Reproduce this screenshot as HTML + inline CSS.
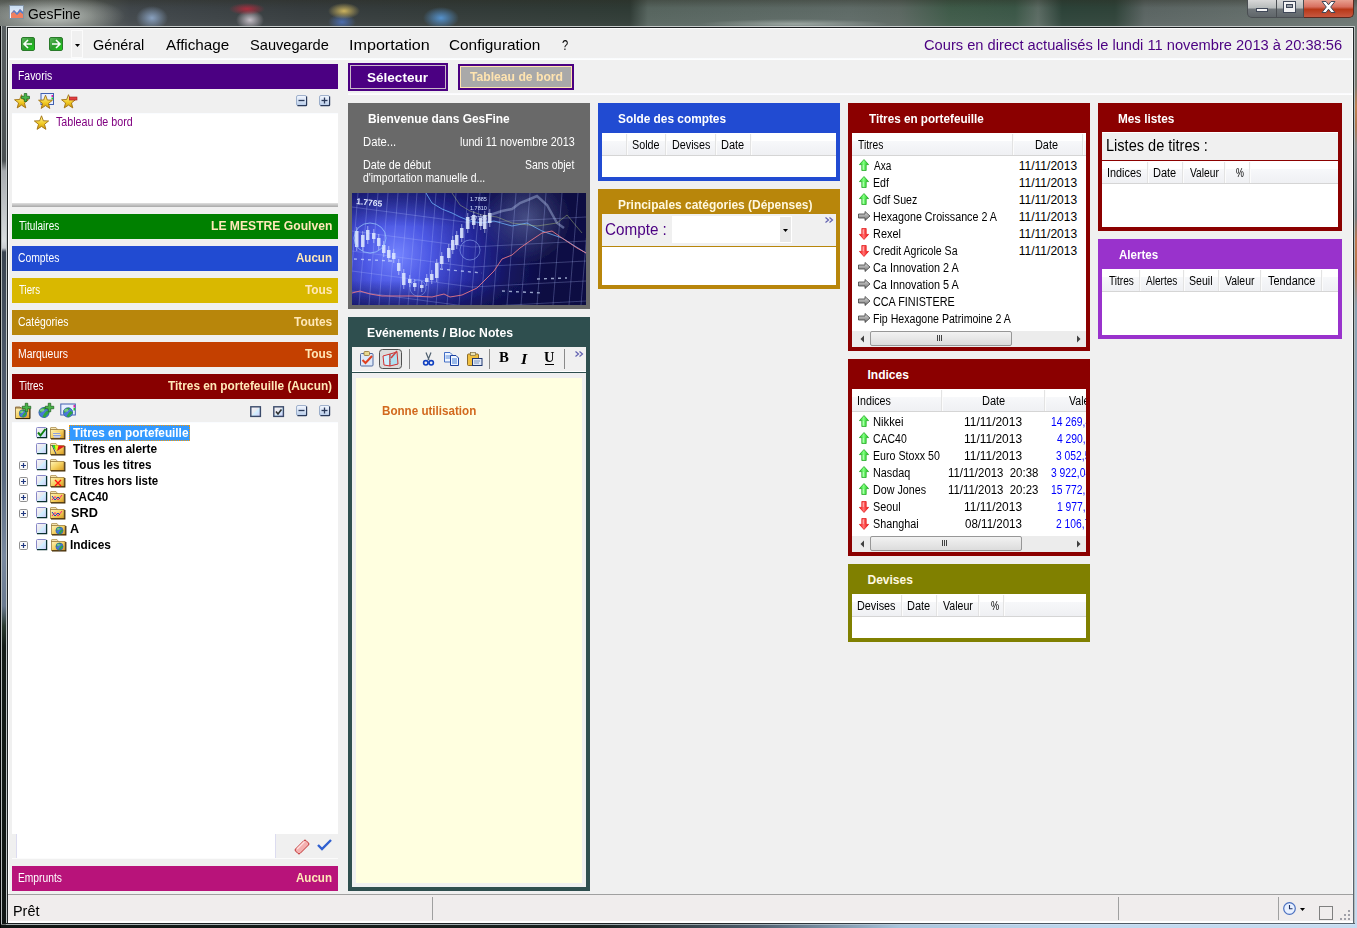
<!DOCTYPE html>
<html><head><meta charset="utf-8"><style>
html,body{margin:0;padding:0;width:1357px;height:928px;overflow:hidden;position:relative;background:#f0f0f0;font-family:"Liberation Sans", sans-serif;}
div,span,svg{position:absolute;box-sizing:border-box;}
.t{white-space:pre;}
</style></head><body>
<div style="left:0px;top:0px;width:1357px;height:928px;background:linear-gradient(90deg,#6c7270 0px,#4a5052 120px,#3a4044 300px,#353c3e 600px,#34423c 850px,#3e5a4a 1000px,#5a6a64 1150px,#6e7a76 1357px);"></div>
<div style="left:0px;top:0px;width:1357px;height:26px;background:linear-gradient(90deg,#6a706c 0px,#5a605c 90px,#40464a 130px,#363c3e 300px,#323a38 450px,#2e3a34 630px,#56645e 648px,#5e6a66 850px,#5a6660 900px,#3e5a48 950px,#3a5646 1015px,#5a6a62 1038px,#2c4238 1062px,#2e4238 1115px,#5a6462 1145px,#6a7470 1357px);"></div>
<div style="left:0px;top:0px;width:1357px;height:26px;background:linear-gradient(180deg,rgba(40,40,30,0.35) 0px,rgba(40,40,30,0) 8px,rgba(255,255,255,0.03) 20px,rgba(255,255,255,0.06) 26px);"></div>
<div style="left:0px;top:0px;width:220px;height:26px;background:radial-gradient(ellipse 70px 20px at 55px 16px,rgba(225,230,225,0.75),rgba(210,215,210,0.3) 60%,rgba(200,205,200,0));"></div>
<div style="left:130px;top:2px;width:45px;height:26px;background:radial-gradient(ellipse 16px 12px at 22px 16px,rgba(160,190,230,0.75),rgba(160,190,230,0));"></div>
<div style="left:222px;top:2px;width:50px;height:26px;background:radial-gradient(ellipse 18px 6px at 25px 7px,rgba(200,40,60,0.8),rgba(200,40,60,0)),radial-gradient(ellipse 14px 10px at 28px 18px,rgba(230,220,230,0.8),rgba(230,220,230,0));"></div>
<div style="left:320px;top:2px;width:48px;height:26px;background:radial-gradient(ellipse 16px 8px at 24px 9px,rgba(230,200,100,0.85),rgba(230,200,100,0)),radial-gradient(ellipse 14px 8px at 22px 20px,rgba(80,120,200,0.8),rgba(80,120,200,0));"></div>
<div style="left:415px;top:2px;width:52px;height:26px;background:radial-gradient(ellipse 18px 11px at 26px 16px,rgba(90,160,230,0.85),rgba(90,160,230,0));"></div>
<div style="left:700px;top:18px;width:190px;height:8px;background:radial-gradient(ellipse 95px 5px at 95px 6px,rgba(210,220,215,0.5),rgba(210,220,215,0));"></div>
<div style="left:0px;top:925px;width:1357px;height:3px;background:linear-gradient(90deg,#101614 0px,#1a2220 600px,#506070 760px,#a8c4dc 900px,#c0d8ee 1100px,#c8dcf0 1357px);"></div>
<div style="left:9px;top:5px;width:15px;height:14px;background:linear-gradient(180deg,#c8dcf0,#f8f8ff);border:1px solid #8090a0;"><svg width="14" height="13" style="left:0;top:0"><path d="M1 12 L1 7 L4 4 L7 7 L10 3 L13 6 L13 12 Z" fill="#f08060"/><path d="M1 8 L4 4 L7 7 L10 3 L13 6 L13 8 L10 6 L7 9 L4 6 Z" fill="#5080d0"/></svg></div>
<span class="t" style="left:28.07px;top:5.5px;font-size:15px;line-height:15px;color:#000;transform:scaleX(0.9273);transform-origin:left;">GesFine</span>
<div style="left:1247px;top:0px;width:30px;height:18px;border:1px solid #4a4e52;border-top:none;border-radius:0 0 0 5px;background:linear-gradient(180deg,#d8d8d8 0%,#b8bcbc 45%,#70767a 55%,#60666a 100%);"><div style="left:8px;top:8px;width:12px;height:4px;background:#f4f4f4;border:1px solid #404858;"></div></div>
<div style="left:1277px;top:0px;width:27px;height:18px;border:1px solid #4a4e52;border-top:none;border-left:none;background:linear-gradient(180deg,#d8d8d8 0%,#b8bcbc 45%,#70767a 55%,#60666a 100%);"><div style="left:6px;top:1px;width:13px;height:12px;border:1px solid #404858;background:#f4f4f4;"><div style="left:2px;top:2px;width:7px;height:4px;border:1px solid #404858;background:#9aa0a8"></div></div></div>
<div style="left:1304px;top:0px;width:50px;height:18px;border:1px solid #5a2a20;border-top:none;border-left:none;border-radius:0 0 5px 0;background:linear-gradient(180deg,#e8a090 0%,#d87060 40%,#b83818 55%,#c85840 100%);"><svg width="20" height="16" style="left:17px;top:1px"><path d="M1 0.5 L5 0.5 L7.5 3.8 L10 0.5 L14 0.5 L9.7 6 L14 11.5 L10 11.5 L7.5 8.2 L5 11.5 L1 11.5 L5.3 6 Z" fill="#fff" stroke="#404858" stroke-width="1"/></svg></div>
<div style="left:1px;top:26px;width:1px;height:898px;background:#b4baba;"></div>
<div style="left:2px;top:26px;width:4px;height:898px;background:linear-gradient(180deg,#5a6062 0px,#4a5052 135px,#a8acb0 145px,#d8dcde 215px,#c8ccd0 222px,#3a4450 226px,#4a5666 320px,#5a6a80 450px,#7a8aa0 530px,#6a7a90 580px,#2a3a30 600px,#141c18 620px,#101614 898px);"></div>
<div style="left:6px;top:26px;width:1px;height:898px;background:#c0c6c6;"></div>
<div style="left:7px;top:26px;width:1px;height:897px;background:#202426;"></div>
<div style="left:0px;top:26px;width:1px;height:902px;background:#050505;"></div>
<div style="left:6px;top:26px;width:1349px;height:1px;background:#c8cccc;"></div>
<div style="left:7px;top:27px;width:1347px;height:1px;background:#1c2022;"></div>
<div style="left:1354px;top:26px;width:1px;height:898px;background:#b4baba;"></div>
<div style="left:1353px;top:27px;width:1px;height:897px;background:linear-gradient(180deg,#202426 0px,#303638 400px,#5a6670 897px);"></div>
<div style="left:1355px;top:26px;width:2px;height:899px;background:linear-gradient(180deg,#6e7a76 0px,#7a7a70 60px,#c08050 80px,#b07850 100px,#8a8a88 120px,#707a80 190px,#c07850 215px,#b87850 245px,#8aa0b0 280px,#a8c0d8 500px,#c8dcf0 899px);"></div>
<div style="left:6px;top:923px;width:1349px;height:1px;background:linear-gradient(90deg,#1a1e20 0px,#202426 700px,#4a5660 1000px,#5a6670 1357px);"></div>
<div style="left:6px;top:924px;width:1349px;height:1px;background:linear-gradient(90deg,#a8b0b0 0px,#98a4a8 700px,#c8dcf0 1000px,#d0e4f4 1357px);"></div>
<div style="left:8px;top:28px;width:1345px;height:894px;background:#f0f0f0;border-top:1px solid #fff;border-left:1px solid #fff;border-right:1px solid #fafafa;"></div>
<div style="left:8px;top:58px;width:1345px;height:2px;background:linear-gradient(180deg,#f8fafd,#ffffff);"></div>
<div style="left:21px;top:37px;width:14px;height:14px;border-radius:2px;background:linear-gradient(135deg,#5cb85c 0%,#2e9a2e 50%,#1acd1a 100%);border:1px solid #2a7a2a;"><svg width="14" height="14" style="left:-1px;top:-1px"><path d="M11 7 L3.5 7 M7 3 L3 7 L7 11" stroke="#fff" stroke-width="1.6" fill="none"/></svg></div>
<div style="left:49px;top:37px;width:14px;height:14px;border-radius:2px;background:linear-gradient(135deg,#5cb85c 0%,#2e9a2e 50%,#1acd1a 100%);border:1px solid #2a7a2a;"><svg width="14" height="14" style="left:-1px;top:-1px"><path d="M3 7 L10.5 7 M7 3 L11 7 L7 11" stroke="#fff" stroke-width="1.6" fill="none"/></svg></div>
<div style="left:71px;top:30px;width:12px;height:28px;border:1px solid #fbfbfb;"></div>
<div style="left:75px;top:44px;width:5px;height:3px;"><svg width="5" height="3" style="left:0;top:0"><path d="M0 0 L5 0 L2.5 3 Z" fill="#000"/></svg></div>
<span class="t" style="left:93.04px;top:37px;font-size:15px;line-height:15px;color:#000;transform:scaleX(0.9615);transform-origin:left;">Général</span>
<span class="t" style="left:166.00px;top:37px;font-size:15px;line-height:15px;color:#000;transform:scaleX(1.0161);transform-origin:left;">Affichage</span>
<span class="t" style="left:250.03px;top:37px;font-size:15px;line-height:15px;color:#000;transform:scaleX(0.9747);transform-origin:left;">Sauvegarde</span>
<span class="t" style="left:348.92px;top:37px;font-size:15px;line-height:15px;color:#000;transform:scaleX(1.0753);transform-origin:left;">Importation</span>
<span class="t" style="left:448.98px;top:37px;font-size:15px;line-height:15px;color:#000;transform:scaleX(1.0227);transform-origin:left;">Configuration</span>
<span class="t" style="left:562.26px;top:37px;font-size:15px;line-height:15px;color:#000;transform:scaleX(0.7429);transform-origin:left;">?</span>
<span class="t" style="left:924.05px;top:36.6px;font-size:15.5px;line-height:15.5px;color:#4b0082;transform:scaleX(0.9466);transform-origin:left;">Cours en direct actualisés le lundi 11 novembre 2013 à 20:38:56</span>
<div style="left:12px;top:64px;width:326px;height:25px;background:#4b0082;"></div>
<span class="t" style="left:17.63px;top:70px;font-size:12px;line-height:12px;color:#fff;transform:scaleX(0.8684);transform-origin:left;">Favoris</span>
<div style="left:12px;top:113px;width:326px;height:1px;background:#fafcff;"></div>
<div style="left:12px;top:114px;width:326px;height:89px;background:#fff;"></div>
<div style="left:12px;top:203px;width:326px;height:4px;background:linear-gradient(180deg,#e0e0e0,#a8a8a8);"></div>
<span class="t" style="left:55.50px;top:116px;font-size:12px;line-height:12px;color:#800080;transform:scaleX(0.8907);transform-origin:left;">Tableau de bord</span>
<div style="left:12px;top:214px;width:326px;height:25px;background:#008000;"></div>
<span class="t" style="left:18.50px;top:220px;font-size:12px;line-height:12px;color:#fff;transform:scaleX(0.8333);transform-origin:left;">Titulaires</span>
<span class="t" style="left:210.69px;top:220px;font-size:12px;line-height:12px;color:#ffe8b8;font-weight:bold;transform:scaleX(1.0109);transform-origin:left;">LE MESTRE Goulven</span>
<div style="left:12px;top:246px;width:326px;height:25px;background:#214bd2;"></div>
<span class="t" style="left:17.64px;top:252px;font-size:12px;line-height:12px;color:#fff;transform:scaleX(0.8617);transform-origin:left;">Comptes</span>
<span class="t" style="left:296.30px;top:252px;font-size:12px;line-height:12px;color:#ffe8b8;font-weight:bold;transform:scaleX(0.9649);transform-origin:left;">Aucun</span>
<div style="left:12px;top:278px;width:326px;height:25px;background:#d9b800;"></div>
<span class="t" style="left:18.50px;top:284px;font-size:12px;line-height:12px;color:#fff;transform:scaleX(0.8077);transform-origin:left;">Tiers</span>
<span class="t" style="left:305.30px;top:284px;font-size:12px;line-height:12px;color:#ffe8b8;font-weight:bold;transform:scaleX(0.9889);transform-origin:left;">Tous</span>
<div style="left:12px;top:310px;width:326px;height:25px;background:#b8860b;"></div>
<span class="t" style="left:17.63px;top:316px;font-size:12px;line-height:12px;color:#fff;transform:scaleX(0.8684);transform-origin:left;">Catégories</span>
<span class="t" style="left:294.30px;top:316px;font-size:12px;line-height:12px;color:#ffe8b8;font-weight:bold;transform:scaleX(0.9921);transform-origin:left;">Toutes</span>
<div style="left:12px;top:342px;width:326px;height:25px;background:#c44000;"></div>
<span class="t" style="left:17.63px;top:348px;font-size:12px;line-height:12px;color:#fff;transform:scaleX(0.8696);transform-origin:left;">Marqueurs</span>
<span class="t" style="left:305.30px;top:348px;font-size:12px;line-height:12px;color:#ffe8b8;font-weight:bold;transform:scaleX(0.9889);transform-origin:left;">Tous</span>
<div style="left:12px;top:374px;width:326px;height:25px;background:#880000;"></div>
<span class="t" style="left:18.50px;top:380px;font-size:12px;line-height:12px;color:#fff;transform:scaleX(0.8276);transform-origin:left;">Titres</span>
<span class="t" style="left:168.40px;top:380px;font-size:12px;line-height:12px;color:#ffe8b8;font-weight:bold;transform:scaleX(0.9855);transform-origin:left;">Titres en portefeuille (Aucun)</span>
<div style="left:12px;top:422px;width:326px;height:1px;background:#fafcff;"></div>
<div style="left:12px;top:423px;width:326px;height:411px;background:#fff;"></div>
<div style="left:69px;top:425px;width:121px;height:16px;background:#3399ff;border:1px dotted #ff9900;"></div>
<span class="t" style="left:72.60px;top:427px;font-size:12px;line-height:12px;color:#fff;font-weight:bold;transform:scaleX(0.9797);transform-origin:left;">Titres en portefeuille</span>
<span class="t" style="left:72.60px;top:443px;font-size:12px;line-height:12px;color:#000;font-weight:bold;transform:scaleX(0.9882);transform-origin:left;">Titres en alerte</span>
<span class="t" style="left:72.60px;top:459px;font-size:12px;line-height:12px;color:#000;font-weight:bold;transform:scaleX(0.9750);transform-origin:left;">Tous les titres</span>
<span class="t" style="left:72.60px;top:475px;font-size:12px;line-height:12px;color:#000;font-weight:bold;transform:scaleX(0.9551);transform-origin:left;">Titres hors liste</span>
<span class="t" style="left:70.10px;top:491px;font-size:12px;line-height:12px;color:#000;font-weight:bold;transform:scaleX(0.9744);transform-origin:left;">CAC40</span>
<span class="t" style="left:70.84px;top:507px;font-size:12px;line-height:12px;color:#000;font-weight:bold;transform:scaleX(1.0625);transform-origin:left;">SRD</span>
<span class="t" style="left:70.10px;top:523px;font-size:12px;line-height:12px;color:#000;font-weight:bold;transform:scaleX(1.0500);transform-origin:left;">A</span>
<span class="t" style="left:70.31px;top:539px;font-size:12px;line-height:12px;color:#000;font-weight:bold;transform:scaleX(0.9875);transform-origin:left;">Indices</span>
<div style="left:12px;top:834px;width:326px;height:24px;background:#f0f0f0;"></div>
<div style="left:16px;top:834px;width:1px;height:25px;background:#dcdcf0;"></div>
<div style="left:17px;top:834px;width:258px;height:25px;background:#fff;"></div>
<div style="left:275px;top:834px;width:1px;height:25px;background:#dcdcf0;"></div>
<div style="left:12px;top:858px;width:326px;height:1px;background:#fbfbfb;"></div>
<div style="left:12px;top:866px;width:326px;height:25px;background:#b8137a;"></div>
<span class="t" style="left:17.65px;top:872px;font-size:12px;line-height:12px;color:#fff;transform:scaleX(0.8540);transform-origin:left;">Emprunts</span>
<span class="t" style="left:296.30px;top:872px;font-size:12px;line-height:12px;color:#ffe8b8;font-weight:bold;transform:scaleX(0.9649);transform-origin:left;">Aucun</span>
<div style="left:8px;top:894px;width:1345px;height:1px;background:#a0a0a0;"></div>
<div style="left:8px;top:895px;width:1345px;height:26px;background:#f0eded;"></div>
<div style="left:8px;top:921px;width:1345px;height:2px;background:#ffffff;"></div>
<span class="t" style="left:12.74px;top:903px;font-size:15px;line-height:15px;color:#000;transform:scaleX(0.9615);transform-origin:left;">Prêt</span>
<div style="left:432px;top:897px;width:1px;height:23px;background:#a0a0a0;"></div>
<div style="left:1118px;top:897px;width:1px;height:23px;background:#a0a0a0;"></div>
<div style="left:1278px;top:897px;width:1px;height:23px;background:#a0a0a0;"></div>
<div style="left:1319px;top:906px;width:14px;height:14px;border:1px solid #808080;"></div>
<div style="left:348px;top:63px;width:100px;height:28px;background:#4b0082;"><div style="left:2px;top:2px;width:96px;height:24px;border:1px solid #c8b8c8;"></div></div>
<span class="t" style="left:366.56px;top:70.5px;font-size:13px;line-height:13px;color:#fff;font-weight:bold;transform:scaleX(1.0414);transform-origin:left;">Sélecteur</span>
<div style="left:458px;top:64px;width:116px;height:26px;background:#a9a9a9;border:2px solid #4b0082;"><div style="left:0;top:0;width:112px;height:22px;border:1px solid #ffe4b0;"></div></div>
<span class="t" style="left:470.00px;top:70.6px;font-size:12px;line-height:12px;color:#ffe4b0;font-weight:bold;transform:scaleX(1.0132);transform-origin:left;">Tableau de bord</span>
<div style="left:348px;top:93px;width:1005px;height:2px;background:linear-gradient(180deg,#f8f8fc,#fff);"></div>
<div style="left:348px;top:103px;width:242px;height:206px;background:#696969;"></div>
<span class="t" style="left:367.51px;top:113px;font-size:12px;line-height:12px;color:#fff;font-weight:bold;transform:scaleX(0.9929);transform-origin:left;">Bienvenue dans GesFine</span>
<span class="t" style="left:362.56px;top:136px;font-size:12px;line-height:12px;color:#fff;transform:scaleX(0.9394);transform-origin:left;">Date...</span>
<span class="t" style="left:459.50px;top:136px;font-size:12px;line-height:12px;color:#fff;transform:scaleX(0.8976);transform-origin:left;">lundi 11 novembre 2013</span>
<span class="t" style="left:362.60px;top:159px;font-size:12px;line-height:12px;color:#fff;transform:scaleX(0.8986);transform-origin:left;">Date de début</span>
<span class="t" style="left:524.63px;top:159px;font-size:12px;line-height:12px;color:#fff;transform:scaleX(0.8696);transform-origin:left;">Sans objet</span>
<span class="t" style="left:363.00px;top:172px;font-size:12px;line-height:12px;color:#fff;transform:scaleX(0.8705);transform-origin:left;">d&#x27;importation manuelle d...</span>
<svg width="234" height="112" style="left:352px;top:193px"><defs><radialGradient id="cg" gradientUnits="userSpaceOnUse" cx="45" cy="62" r="150"><stop offset="0" stop-color="#7484ff"/><stop offset="0.22" stop-color="#4c58e4"/><stop offset="0.5" stop-color="#262aa0"/><stop offset="0.75" stop-color="#141560"/><stop offset="1" stop-color="#0e0e44"/></radialGradient><radialGradient id="cg2" gradientUnits="userSpaceOnUse" cx="175" cy="25" r="45"><stop offset="0" stop-color="#8898c8" stop-opacity="0.45"/><stop offset="1" stop-color="#8898c8" stop-opacity="0"/></radialGradient><filter id="cblur"><feGaussianBlur stdDeviation="0.45"/></filter><linearGradient id="cg3" x1="0" y1="0" x2="0" y2="1"><stop offset="0" stop-color="#0a0a40" stop-opacity="0.5"/><stop offset="0.3" stop-color="#0a0a40" stop-opacity="0"/><stop offset="0.78" stop-color="#0a0a40" stop-opacity="0"/><stop offset="1" stop-color="#0a0a40" stop-opacity="0.55"/></linearGradient></defs><g filter="url(#cblur)"><rect width="234" height="112" fill="url(#cg)"/><rect width="234" height="112" fill="url(#cg3)"/><rect width="234" height="112" fill="url(#cg2)"/><path d="M6 0 L-3 112 M16 0 L7 112 M26 0 L17 112 M36 0 L27 112 M46 0 L37 112 M56 0 L47 112 M65 0 L56 112 M74 0 L65 112 M84 0 L75 112 M93 0 L84 112 M104 0 L95 112 M116 0 L107 112 M128 0 L119 112 M138 0 L129 112 M150 0 L141 112 M164 0 L155 112 M178 0 L169 112 M194 0 L185 112 M210 0 L201 112 M226 0 L217 112 M238 0 L229 112 M0 14 L120 30 L234 24 M0 38 L120 54 L234 48 M0 58 L120 74 L234 68 M0 78 L120 94 L234 88 M0 98 L120 114 L234 108" stroke="#b0c0ff" stroke-opacity="0.3" stroke-width="0.9" fill="none"/><path d="M74 0 L80 10 L90 16 L100 20 L108 24 L118 28 L130 30 L142 28 L160 33 L175 30 L190 38 L210 45 L234 60" stroke="#70b8ff" stroke-width="1" fill="none" stroke-opacity="0.75"/><path d="M100 0 L108 12 L118 18 L130 22 L145 24 L160 30 L185 33 L205 30 L215 22 L230 40" stroke="#c0d880" stroke-width="0.8" fill="none" stroke-opacity="0.5"/><path d="M0 100 L8 98 L18 101 L30 103 L60 103 L80 104 L92 101 L98 104 L110 102 L125 95 L135 85 L142 78 L150 66 L160 62 L168 55 L178 48 L190 40 L200 38 L210 45 L225 55 L234 60" stroke="#e87888" stroke-width="0.9" fill="none"/><rect x="3" y="38" width="3.5" height="16" fill="#e0eaff" fill-opacity="0.85"/><path d="M4.75 34 L4.75 58" stroke="#e0eaff" stroke-width="0.8" stroke-opacity="0.7"/><rect x="9" y="42" width="3.5" height="12" fill="#e0eaff" fill-opacity="0.85"/><path d="M10.75 38 L10.75 58" stroke="#e0eaff" stroke-width="0.8" stroke-opacity="0.7"/><rect x="14" y="37" width="3.5" height="10" fill="#e0eaff" fill-opacity="0.85"/><path d="M15.75 33 L15.75 51" stroke="#e0eaff" stroke-width="0.8" stroke-opacity="0.7"/><rect x="20" y="40" width="3.5" height="6" fill="#e0eaff" fill-opacity="0.85"/><path d="M21.75 36 L21.75 50" stroke="#e0eaff" stroke-width="0.8" stroke-opacity="0.7"/><rect x="25" y="45" width="3.5" height="8" fill="#e0eaff" fill-opacity="0.85"/><path d="M26.75 41 L26.75 57" stroke="#e0eaff" stroke-width="0.8" stroke-opacity="0.7"/><rect x="30" y="52" width="3.5" height="8" fill="#e0eaff" fill-opacity="0.85"/><path d="M31.75 48 L31.75 64" stroke="#e0eaff" stroke-width="0.8" stroke-opacity="0.7"/><rect x="35" y="57" width="3.5" height="8" fill="#e0eaff" fill-opacity="0.85"/><path d="M36.75 53 L36.75 69" stroke="#e0eaff" stroke-width="0.8" stroke-opacity="0.7"/><rect x="40" y="60" width="3.5" height="6" fill="#e0eaff" fill-opacity="0.85"/><path d="M41.75 56 L41.75 70" stroke="#e0eaff" stroke-width="0.8" stroke-opacity="0.7"/><rect x="45" y="70" width="3.5" height="8" fill="#e0eaff" fill-opacity="0.85"/><path d="M46.75 66 L46.75 82" stroke="#e0eaff" stroke-width="0.8" stroke-opacity="0.7"/><rect x="50" y="80" width="3.5" height="12" fill="#e0eaff" fill-opacity="0.85"/><path d="M51.75 76 L51.75 96" stroke="#e0eaff" stroke-width="0.8" stroke-opacity="0.7"/><rect x="56" y="86" width="3.5" height="4" fill="#e0eaff" fill-opacity="0.85"/><path d="M57.75 82 L57.75 94" stroke="#e0eaff" stroke-width="0.8" stroke-opacity="0.7"/><rect x="61" y="90" width="3.5" height="4" fill="#e0eaff" fill-opacity="0.85"/><path d="M62.75 86 L62.75 98" stroke="#e0eaff" stroke-width="0.8" stroke-opacity="0.7"/><rect x="68" y="92" width="3.5" height="3" fill="#e0eaff" fill-opacity="0.85"/><path d="M69.75 88 L69.75 99" stroke="#e0eaff" stroke-width="0.8" stroke-opacity="0.7"/><rect x="73" y="85" width="3.5" height="4" fill="#e0eaff" fill-opacity="0.85"/><path d="M74.75 81 L74.75 93" stroke="#e0eaff" stroke-width="0.8" stroke-opacity="0.7"/><rect x="78" y="81" width="3.5" height="6" fill="#e0eaff" fill-opacity="0.85"/><path d="M79.75 77 L79.75 91" stroke="#e0eaff" stroke-width="0.8" stroke-opacity="0.7"/><rect x="83" y="70" width="3.5" height="15" fill="#e0eaff" fill-opacity="0.85"/><path d="M84.75 66 L84.75 89" stroke="#e0eaff" stroke-width="0.8" stroke-opacity="0.7"/><rect x="88" y="63" width="3.5" height="8" fill="#e0eaff" fill-opacity="0.85"/><path d="M89.75 59 L89.75 75" stroke="#e0eaff" stroke-width="0.8" stroke-opacity="0.7"/><rect x="95" y="55" width="3.5" height="10" fill="#e0eaff" fill-opacity="0.85"/><path d="M96.75 51 L96.75 69" stroke="#e0eaff" stroke-width="0.8" stroke-opacity="0.7"/><rect x="99" y="47" width="3.5" height="10" fill="#e0eaff" fill-opacity="0.85"/><path d="M100.75 43 L100.75 61" stroke="#e0eaff" stroke-width="0.8" stroke-opacity="0.7"/><rect x="103" y="42" width="3.5" height="10" fill="#e0eaff" fill-opacity="0.85"/><path d="M104.75 38 L104.75 56" stroke="#e0eaff" stroke-width="0.8" stroke-opacity="0.7"/><rect x="108" y="35" width="3.5" height="10" fill="#e0eaff" fill-opacity="0.85"/><path d="M109.75 31 L109.75 49" stroke="#e0eaff" stroke-width="0.8" stroke-opacity="0.7"/><rect x="114" y="24" width="3.5" height="12" fill="#e0eaff" fill-opacity="0.85"/><path d="M115.75 20 L115.75 40" stroke="#e0eaff" stroke-width="0.8" stroke-opacity="0.7"/><rect x="120" y="22" width="3.5" height="10" fill="#e0eaff" fill-opacity="0.85"/><path d="M121.75 18 L121.75 36" stroke="#e0eaff" stroke-width="0.8" stroke-opacity="0.7"/><rect x="127" y="25" width="3.5" height="8" fill="#e0eaff" fill-opacity="0.85"/><path d="M128.75 21 L128.75 37" stroke="#e0eaff" stroke-width="0.8" stroke-opacity="0.7"/><rect x="131" y="22" width="3.5" height="14" fill="#e0eaff" fill-opacity="0.85"/><path d="M132.75 18 L132.75 40" stroke="#e0eaff" stroke-width="0.8" stroke-opacity="0.7"/><rect x="136" y="20" width="3.5" height="10" fill="#e0eaff" fill-opacity="0.85"/><path d="M137.75 16 L137.75 34" stroke="#e0eaff" stroke-width="0.8" stroke-opacity="0.7"/><path d="M138 22 L150 18 L160 16 L168 10 L178 6 L185 3 L195 12 L205 30 L212 35" stroke="#a8b8e0" stroke-width="2.5" fill="none" stroke-opacity="0.45"/><ellipse cx="18" cy="45" rx="16" ry="15" stroke="#a0d0ff" stroke-width="1" fill="none" stroke-opacity="0.7"/><circle cx="118" cy="57" r="10" stroke="#a0c0ff" stroke-width="0.8" fill="none" stroke-opacity="0.6"/><circle cx="66" cy="95" r="8" stroke="#a0c0ff" stroke-width="0.8" fill="none" stroke-opacity="0.5"/><path d="M2 66 L40 68 M88 76 L130 80 M150 98 L190 100 M185 86 L215 85" stroke="#d0e0ff" stroke-width="1.4" stroke-dasharray="3 4" fill="none" stroke-opacity="0.7"/><text x="4" y="11" font-family="Liberation Sans" font-size="8.5" font-weight="bold" fill="#e0e8ff" transform="rotate(6 4 11)">1.7765</text><text x="118" y="8" font-family="Liberation Sans" font-size="5.5" fill="#d0e0ff">1.7885</text><text x="118" y="17" font-family="Liberation Sans" font-size="5.5" fill="#d0e0ff">1.7810</text><text x="118" y="27" font-family="Liberation Sans" font-size="5.5" fill="#d0e0ff">1.7785</text></g></svg>
<div style="left:348px;top:317px;width:242px;height:574px;background:#2f4f4f;"></div>
<span class="t" style="left:367.48px;top:327px;font-size:12px;line-height:12px;color:#fff;font-weight:bold;transform:scaleX(1.0183);transform-origin:left;">Evénements / Bloc Notes</span>
<div style="left:352px;top:347px;width:234px;height:24px;background:#f0f0f0;"></div>
<div style="left:352px;top:371px;width:234px;height:1px;background:#fff;"></div>
<div style="left:352px;top:372px;width:234px;height:1px;background:#2f4f4f;"></div>
<div style="left:352px;top:373px;width:234px;height:514px;background:#f0f0f0;"></div>
<div style="left:356px;top:378px;width:226px;height:505px;background:#ffffe0;"></div>
<span class="t" style="left:381.53px;top:405px;font-size:12px;line-height:12px;color:#d2691e;font-weight:bold;transform:scaleX(0.9688);transform-origin:left;">Bonne utilisation</span>
<div style="left:598px;top:103px;width:242px;height:78px;background:#214bd2;"></div>
<span class="t" style="left:617.51px;top:113px;font-size:12px;line-height:12px;color:#fff;font-weight:bold;transform:scaleX(0.9880);transform-origin:left;">Solde des comptes</span>
<div style="left:602px;top:133px;width:234px;height:44px;background:#fff;"></div>
<div style="left:602px;top:133px;width:234px;height:8px;background:#fff;"></div>
<div style="left:602px;top:141px;width:234px;height:14px;background:linear-gradient(180deg,#f7f8fa,#eff0f3);"></div>
<div style="left:602px;top:155px;width:234px;height:1px;background:#d5d5d5;"></div>
<div style="left:626px;top:134px;width:1px;height:21px;background:#e3e3e3;"></div>
<div style="left:627px;top:134px;width:1px;height:21px;background:#fcfcfc;"></div>
<div style="left:665px;top:134px;width:1px;height:21px;background:#e3e3e3;"></div>
<div style="left:666px;top:134px;width:1px;height:21px;background:#fcfcfc;"></div>
<div style="left:715px;top:134px;width:1px;height:21px;background:#e3e3e3;"></div>
<div style="left:716px;top:134px;width:1px;height:21px;background:#fcfcfc;"></div>
<div style="left:750px;top:134px;width:1px;height:21px;background:#e3e3e3;"></div>
<div style="left:751px;top:134px;width:1px;height:21px;background:#fcfcfc;"></div>
<span class="t" style="left:632.10px;top:139px;font-size:12px;line-height:12px;color:#000;transform:scaleX(0.8966);transform-origin:left;">Solde</span>
<span class="t" style="left:671.50px;top:139px;font-size:12px;line-height:12px;color:#000;transform:scaleX(0.8976);transform-origin:left;">Devises</span>
<span class="t" style="left:721.28px;top:139px;font-size:12px;line-height:12px;color:#000;transform:scaleX(0.9167);transform-origin:left;">Date</span>
<div style="left:598px;top:189px;width:242px;height:100px;background:#b8860b;"></div>
<span class="t" style="left:617.51px;top:199px;font-size:12px;line-height:12px;color:#fff8e0;font-weight:bold;transform:scaleX(0.9948);transform-origin:left;">Principales catégories (Dépenses)</span>
<div style="left:602px;top:214px;width:234px;height:32px;background:#f0f0f0;"></div>
<div style="left:602px;top:246px;width:234px;height:1px;background:#b8860b;"></div>
<div style="left:602px;top:247px;width:234px;height:38px;background:#fff;"></div>
<span class="t" style="left:605.05px;top:222px;font-size:16px;line-height:16px;color:#4b0082;transform:scaleX(0.9524);transform-origin:left;">Compte :</span>
<div style="left:672px;top:216px;width:120px;height:27px;background:#fff;"></div>
<div style="left:780px;top:217px;width:11px;height:25px;background:#e8e8e8;"></div>
<div style="left:848px;top:103px;width:242px;height:248px;background:#8b0000;"></div>
<span class="t" style="left:868.50px;top:113px;font-size:12px;line-height:12px;color:#fff;font-weight:bold;transform:scaleX(0.9746);transform-origin:left;">Titres en portefeuille</span>
<div style="left:852px;top:133px;width:234px;height:214px;background:#fff;"></div>
<div style="left:852px;top:133px;width:234px;height:8px;background:#fff;"></div>
<div style="left:852px;top:141px;width:234px;height:14px;background:linear-gradient(180deg,#f7f8fa,#eff0f3);"></div>
<div style="left:852px;top:155px;width:234px;height:1px;background:#d5d5d5;"></div>
<div style="left:1012px;top:134px;width:1px;height:21px;background:#e3e3e3;"></div>
<div style="left:1013px;top:134px;width:1px;height:21px;background:#fcfcfc;"></div>
<div style="left:1082px;top:134px;width:1px;height:21px;background:#e3e3e3;"></div>
<div style="left:1083px;top:134px;width:1px;height:21px;background:#fcfcfc;"></div>
<span class="t" style="left:858.40px;top:139px;font-size:12px;line-height:12px;color:#000;transform:scaleX(0.8552);transform-origin:left;">Titres</span>
<span class="t" style="left:1035.39px;top:139px;font-size:12px;line-height:12px;color:#000;transform:scaleX(0.9083);transform-origin:left;">Date</span>
<svg width="11" height="13" style="left:858.5px;top:159px"><path d="M5 0.5 L9.6 5.6 L7.2 5.6 L7.2 11.5 L2.8 11.5 L2.8 5.6 L0.4 5.6 Z" fill="url(#gUp)" stroke="#18a018" stroke-width="0.7"/><path d="M4.2 6 V10.5" stroke="#d0ffd0" stroke-width="1" stroke-opacity="0.8"/></svg>
<span class="t" style="left:873.70px;top:160px;font-size:12px;line-height:12px;color:#000;transform:scaleX(0.8333);transform-origin:left;">Axa</span>
<span class="t" style="left:1018.80px;top:160px;font-size:12px;line-height:12px;color:#000;transform:scaleX(1.0000);transform-origin:left;">11/11/2013</span>
<svg width="11" height="13" style="left:858.5px;top:176px"><path d="M5 0.5 L9.6 5.6 L7.2 5.6 L7.2 11.5 L2.8 11.5 L2.8 5.6 L0.4 5.6 Z" fill="url(#gUp)" stroke="#18a018" stroke-width="0.7"/><path d="M4.2 6 V10.5" stroke="#d0ffd0" stroke-width="1" stroke-opacity="0.8"/></svg>
<span class="t" style="left:872.82px;top:177px;font-size:12px;line-height:12px;color:#000;transform:scaleX(0.8824);transform-origin:left;">Edf</span>
<span class="t" style="left:1018.80px;top:177px;font-size:12px;line-height:12px;color:#000;transform:scaleX(1.0000);transform-origin:left;">11/11/2013</span>
<svg width="11" height="13" style="left:858.5px;top:193px"><path d="M5 0.5 L9.6 5.6 L7.2 5.6 L7.2 11.5 L2.8 11.5 L2.8 5.6 L0.4 5.6 Z" fill="url(#gUp)" stroke="#18a018" stroke-width="0.7"/><path d="M4.2 6 V10.5" stroke="#d0ffd0" stroke-width="1" stroke-opacity="0.8"/></svg>
<span class="t" style="left:872.81px;top:194px;font-size:12px;line-height:12px;color:#000;transform:scaleX(0.8857);transform-origin:left;">Gdf Suez</span>
<span class="t" style="left:1018.80px;top:194px;font-size:12px;line-height:12px;color:#000;transform:scaleX(1.0000);transform-origin:left;">11/11/2013</span>
<svg width="13" height="11" style="left:858px;top:211px"><defs></defs><path d="M0.5 3 L7 3 L7 0.5 L12 5 L7 9.5 L7 7 L0.5 7 Z" fill="url(#gRt)" stroke="#404040" stroke-width="0.8"/></svg>
<span class="t" style="left:872.81px;top:211px;font-size:12px;line-height:12px;color:#000;transform:scaleX(0.8928);transform-origin:left;">Hexagone Croissance 2 A</span>
<span class="t" style="left:1018.80px;top:211px;font-size:12px;line-height:12px;color:#000;transform:scaleX(1.0000);transform-origin:left;">11/11/2013</span>
<svg width="11" height="13" style="left:858.5px;top:228px"><path d="M5 11.5 L9.6 6.4 L7.2 6.4 L7.2 0.5 L2.8 0.5 L2.8 6.4 L0.4 6.4 Z" fill="url(#gDn)" stroke="#e01010" stroke-width="0.7"/><path d="M4.2 1.5 V6" stroke="#ffd0d0" stroke-width="1" stroke-opacity="0.8"/></svg>
<span class="t" style="left:872.79px;top:228px;font-size:12px;line-height:12px;color:#000;transform:scaleX(0.9103);transform-origin:left;">Rexel</span>
<span class="t" style="left:1018.80px;top:228px;font-size:12px;line-height:12px;color:#000;transform:scaleX(1.0000);transform-origin:left;">11/11/2013</span>
<svg width="11" height="13" style="left:858.5px;top:245px"><path d="M5 11.5 L9.6 6.4 L7.2 6.4 L7.2 0.5 L2.8 0.5 L2.8 6.4 L0.4 6.4 Z" fill="url(#gDn)" stroke="#e01010" stroke-width="0.7"/><path d="M4.2 1.5 V6" stroke="#ffd0d0" stroke-width="1" stroke-opacity="0.8"/></svg>
<span class="t" style="left:872.82px;top:245px;font-size:12px;line-height:12px;color:#000;transform:scaleX(0.8800);transform-origin:left;">Credit Agricole Sa</span>
<span class="t" style="left:1018.80px;top:245px;font-size:12px;line-height:12px;color:#000;transform:scaleX(1.0000);transform-origin:left;">11/11/2013</span>
<svg width="13" height="11" style="left:858px;top:262px"><defs></defs><path d="M0.5 3 L7 3 L7 0.5 L12 5 L7 9.5 L7 7 L0.5 7 Z" fill="url(#gRt)" stroke="#404040" stroke-width="0.8"/></svg>
<span class="t" style="left:872.80px;top:262px;font-size:12px;line-height:12px;color:#000;transform:scaleX(0.9043);transform-origin:left;">Ca Innovation 2 A</span>
<svg width="13" height="11" style="left:858px;top:279px"><defs></defs><path d="M0.5 3 L7 3 L7 0.5 L12 5 L7 9.5 L7 7 L0.5 7 Z" fill="url(#gRt)" stroke="#404040" stroke-width="0.8"/></svg>
<span class="t" style="left:872.80px;top:279px;font-size:12px;line-height:12px;color:#000;transform:scaleX(0.9043);transform-origin:left;">Ca Innovation 5 A</span>
<svg width="13" height="11" style="left:858px;top:296px"><defs></defs><path d="M0.5 3 L7 3 L7 0.5 L12 5 L7 9.5 L7 7 L0.5 7 Z" fill="url(#gRt)" stroke="#404040" stroke-width="0.8"/></svg>
<span class="t" style="left:872.80px;top:296px;font-size:12px;line-height:12px;color:#000;transform:scaleX(0.9011);transform-origin:left;">CCA FINISTERE</span>
<svg width="13" height="11" style="left:858px;top:313px"><defs></defs><path d="M0.5 3 L7 3 L7 0.5 L12 5 L7 9.5 L7 7 L0.5 7 Z" fill="url(#gRt)" stroke="#404040" stroke-width="0.8"/></svg>
<span class="t" style="left:872.82px;top:313px;font-size:12px;line-height:12px;color:#000;transform:scaleX(0.8826);transform-origin:left;">Fip Hexagone Patrimoine 2 A</span>
<div style="left:852px;top:331px;width:234px;height:16px;background:#ececec;"></div>
<div style="left:870px;top:331px;width:142px;height:15px;border:1px solid #979797;border-radius:2px;background:linear-gradient(180deg,#f2f2f2,#dcdcdc);"></div>
<svg width="8" height="8" style="left:859px;top:335px"><path d="M5 0.5 L1.5 4 L5 7.5 Z" fill="#404040"/></svg>
<svg width="8" height="8" style="left:1075px;top:335px"><path d="M2 0.5 L5.5 4 L2 7.5 Z" fill="#404040"/></svg>
<div style="left:937px;top:335px;width:1px;height:6px;background:#404040;"></div>
<div style="left:939px;top:335px;width:1px;height:6px;background:#404040;"></div>
<div style="left:941px;top:335px;width:1px;height:6px;background:#404040;"></div>
<div style="left:848px;top:359px;width:242px;height:197px;background:#8b0000;"></div>
<span class="t" style="left:867.50px;top:369px;font-size:12px;line-height:12px;color:#fff;font-weight:bold;transform:scaleX(1.0000);transform-origin:left;">Indices</span>
<div style="left:852px;top:389px;width:234px;height:163px;background:#fff;"></div>
<div style="left:852px;top:389px;width:234px;height:8px;background:#fff;"></div>
<div style="left:852px;top:397px;width:234px;height:14px;background:linear-gradient(180deg,#f7f8fa,#eff0f3);"></div>
<div style="left:852px;top:411px;width:234px;height:1px;background:#d5d5d5;"></div>
<div style="left:941px;top:390px;width:1px;height:21px;background:#e3e3e3;"></div>
<div style="left:942px;top:390px;width:1px;height:21px;background:#fcfcfc;"></div>
<div style="left:1044px;top:390px;width:1px;height:21px;background:#e3e3e3;"></div>
<div style="left:1045px;top:390px;width:1px;height:21px;background:#fcfcfc;"></div>
<span class="t" style="left:857.21px;top:395px;font-size:12px;line-height:12px;color:#000;transform:scaleX(0.8919);transform-origin:left;">Indices</span>
<span class="t" style="left:981.58px;top:395px;font-size:12px;line-height:12px;color:#000;transform:scaleX(0.9167);transform-origin:left;">Date</span>
<span class="t" style="left:1069.00px;top:395px;font-size:12px;line-height:12px;color:#000;transform:scaleX(0.8824);transform-origin:left;">Valeur</span>
<svg width="11" height="13" style="left:858.5px;top:415px"><path d="M5 0.5 L9.6 5.6 L7.2 5.6 L7.2 11.5 L2.8 11.5 L2.8 5.6 L0.4 5.6 Z" fill="url(#gUp)" stroke="#18a018" stroke-width="0.7"/><path d="M4.2 6 V10.5" stroke="#d0ffd0" stroke-width="1" stroke-opacity="0.8"/></svg>
<span class="t" style="left:873.26px;top:416px;font-size:12px;line-height:12px;color:#000;transform:scaleX(0.9355);transform-origin:left;">Nikkei</span>
<span class="t" style="left:963.90px;top:416px;font-size:12px;line-height:12px;color:#000;transform:scaleX(0.9965);transform-origin:left;">11/11/2013</span>
<span class="t" style="left:1051.24px;top:416px;font-size:12px;line-height:12px;color:#0000ff;transform:scaleX(0.8600);transform-origin:left;">14 269,43</span>
<svg width="11" height="13" style="left:858.5px;top:432px"><path d="M5 0.5 L9.6 5.6 L7.2 5.6 L7.2 11.5 L2.8 11.5 L2.8 5.6 L0.4 5.6 Z" fill="url(#gUp)" stroke="#18a018" stroke-width="0.7"/><path d="M4.2 6 V10.5" stroke="#d0ffd0" stroke-width="1" stroke-opacity="0.8"/></svg>
<span class="t" style="left:873.33px;top:433px;font-size:12px;line-height:12px;color:#000;transform:scaleX(0.8730);transform-origin:left;">CAC40</span>
<span class="t" style="left:963.90px;top:433px;font-size:12px;line-height:12px;color:#000;transform:scaleX(0.9965);transform-origin:left;">11/11/2013</span>
<span class="t" style="left:1057.20px;top:433px;font-size:12px;line-height:12px;color:#0000ff;transform:scaleX(0.8600);transform-origin:left;">4 290,56</span>
<svg width="11" height="13" style="left:858.5px;top:449px"><path d="M5 0.5 L9.6 5.6 L7.2 5.6 L7.2 11.5 L2.8 11.5 L2.8 5.6 L0.4 5.6 Z" fill="url(#gUp)" stroke="#18a018" stroke-width="0.7"/><path d="M4.2 6 V10.5" stroke="#d0ffd0" stroke-width="1" stroke-opacity="0.8"/></svg>
<span class="t" style="left:873.31px;top:450px;font-size:12px;line-height:12px;color:#000;transform:scaleX(0.8865);transform-origin:left;">Euro Stoxx 50</span>
<span class="t" style="left:963.90px;top:450px;font-size:12px;line-height:12px;color:#000;transform:scaleX(0.9965);transform-origin:left;">11/11/2013</span>
<span class="t" style="left:1056.34px;top:450px;font-size:12px;line-height:12px;color:#0000ff;transform:scaleX(0.8600);transform-origin:left;">3 052,53</span>
<svg width="11" height="13" style="left:858.5px;top:466px"><path d="M5 0.5 L9.6 5.6 L7.2 5.6 L7.2 11.5 L2.8 11.5 L2.8 5.6 L0.4 5.6 Z" fill="url(#gUp)" stroke="#18a018" stroke-width="0.7"/><path d="M4.2 6 V10.5" stroke="#d0ffd0" stroke-width="1" stroke-opacity="0.8"/></svg>
<span class="t" style="left:873.30px;top:467px;font-size:12px;line-height:12px;color:#000;transform:scaleX(0.9000);transform-origin:left;">Nasdaq</span>
<span class="t" style="left:948.15px;top:467px;font-size:12px;line-height:12px;color:#000;transform:scaleX(0.9511);transform-origin:left;">11/11/2013  20:38</span>
<span class="t" style="left:1050.64px;top:467px;font-size:12px;line-height:12px;color:#0000ff;transform:scaleX(0.8600);transform-origin:left;">3 922,04</span>
<svg width="11" height="13" style="left:858.5px;top:483px"><path d="M5 0.5 L9.6 5.6 L7.2 5.6 L7.2 11.5 L2.8 11.5 L2.8 5.6 L0.4 5.6 Z" fill="url(#gUp)" stroke="#18a018" stroke-width="0.7"/><path d="M4.2 6 V10.5" stroke="#d0ffd0" stroke-width="1" stroke-opacity="0.8"/></svg>
<span class="t" style="left:873.31px;top:484px;font-size:12px;line-height:12px;color:#000;transform:scaleX(0.8931);transform-origin:left;">Dow Jones</span>
<span class="t" style="left:948.15px;top:484px;font-size:12px;line-height:12px;color:#000;transform:scaleX(0.9511);transform-origin:left;">11/11/2013  20:23</span>
<span class="t" style="left:1051.24px;top:484px;font-size:12px;line-height:12px;color:#0000ff;transform:scaleX(0.8600);transform-origin:left;">15 772,15</span>
<svg width="11" height="13" style="left:858.5px;top:501px"><path d="M5 11.5 L9.6 6.4 L7.2 6.4 L7.2 0.5 L2.8 0.5 L2.8 6.4 L0.4 6.4 Z" fill="url(#gDn)" stroke="#e01010" stroke-width="0.7"/><path d="M4.2 1.5 V6" stroke="#ffd0d0" stroke-width="1" stroke-opacity="0.8"/></svg>
<span class="t" style="left:873.30px;top:501px;font-size:12px;line-height:12px;color:#000;transform:scaleX(0.8966);transform-origin:left;">Seoul</span>
<span class="t" style="left:963.90px;top:501px;font-size:12px;line-height:12px;color:#000;transform:scaleX(0.9965);transform-origin:left;">11/11/2013</span>
<span class="t" style="left:1057.34px;top:501px;font-size:12px;line-height:12px;color:#0000ff;transform:scaleX(0.8600);transform-origin:left;">1 977,15</span>
<svg width="11" height="13" style="left:858.5px;top:518px"><path d="M5 11.5 L9.6 6.4 L7.2 6.4 L7.2 0.5 L2.8 0.5 L2.8 6.4 L0.4 6.4 Z" fill="url(#gDn)" stroke="#e01010" stroke-width="0.7"/><path d="M4.2 1.5 V6" stroke="#ffd0d0" stroke-width="1" stroke-opacity="0.8"/></svg>
<span class="t" style="left:873.30px;top:518px;font-size:12px;line-height:12px;color:#000;transform:scaleX(0.8980);transform-origin:left;">Shanghai</span>
<span class="t" style="left:964.90px;top:518px;font-size:12px;line-height:12px;color:#000;transform:scaleX(0.9627);transform-origin:left;">08/11/2013</span>
<span class="t" style="left:1056.34px;top:518px;font-size:12px;line-height:12px;color:#0000ff;transform:scaleX(0.8600);transform-origin:left;">2 106,72</span>
<div style="left:1086px;top:389px;width:4px;height:163px;background:#8b0000;"></div>
<div style="left:1090px;top:389px;width:20px;height:163px;background:#f0f0f0;"></div>
<div style="left:852px;top:536px;width:234px;height:16px;background:#ececec;"></div>
<div style="left:870px;top:536px;width:152px;height:15px;border:1px solid #979797;border-radius:2px;background:linear-gradient(180deg,#f2f2f2,#dcdcdc);"></div>
<svg width="8" height="8" style="left:859px;top:540px"><path d="M5 0.5 L1.5 4 L5 7.5 Z" fill="#404040"/></svg>
<svg width="8" height="8" style="left:1075px;top:540px"><path d="M2 0.5 L5.5 4 L2 7.5 Z" fill="#404040"/></svg>
<div style="left:942px;top:540px;width:1px;height:6px;background:#404040;"></div>
<div style="left:944px;top:540px;width:1px;height:6px;background:#404040;"></div>
<div style="left:946px;top:540px;width:1px;height:6px;background:#404040;"></div>
<div style="left:848px;top:564px;width:242px;height:78px;background:#808000;"></div>
<span class="t" style="left:867.50px;top:574px;font-size:12px;line-height:12px;color:#fff8e0;font-weight:bold;transform:scaleX(1.0000);transform-origin:left;">Devises</span>
<div style="left:852px;top:594px;width:234px;height:44px;background:#fff;"></div>
<div style="left:852px;top:594px;width:234px;height:8px;background:#fff;"></div>
<div style="left:852px;top:602px;width:234px;height:14px;background:linear-gradient(180deg,#f7f8fa,#eff0f3);"></div>
<div style="left:852px;top:616px;width:234px;height:1px;background:#d5d5d5;"></div>
<div style="left:901px;top:595px;width:1px;height:21px;background:#e3e3e3;"></div>
<div style="left:902px;top:595px;width:1px;height:21px;background:#fcfcfc;"></div>
<div style="left:936px;top:595px;width:1px;height:21px;background:#e3e3e3;"></div>
<div style="left:937px;top:595px;width:1px;height:21px;background:#fcfcfc;"></div>
<div style="left:978px;top:595px;width:1px;height:21px;background:#e3e3e3;"></div>
<div style="left:979px;top:595px;width:1px;height:21px;background:#fcfcfc;"></div>
<div style="left:1003px;top:595px;width:1px;height:21px;background:#e3e3e3;"></div>
<div style="left:1004px;top:595px;width:1px;height:21px;background:#fcfcfc;"></div>
<span class="t" style="left:857.30px;top:600px;font-size:12px;line-height:12px;color:#000;transform:scaleX(0.9024);transform-origin:left;">Devises</span>
<span class="t" style="left:907.38px;top:600px;font-size:12px;line-height:12px;color:#000;transform:scaleX(0.9167);transform-origin:left;">Date</span>
<span class="t" style="left:943.00px;top:600px;font-size:12px;line-height:12px;color:#000;transform:scaleX(0.8824);transform-origin:left;">Valeur</span>
<span class="t" style="left:990.70px;top:600px;font-size:12px;line-height:12px;color:#000;transform:scaleX(0.7600);transform-origin:left;">%</span>
<div style="left:1098px;top:103px;width:244px;height:128px;background:#8b0000;"></div>
<span class="t" style="left:1117.52px;top:113px;font-size:12px;line-height:12px;color:#fff;font-weight:bold;transform:scaleX(0.9821);transform-origin:left;">Mes listes</span>
<div style="left:1102px;top:132px;width:236px;height:28px;background:#f0f0f0;border-top:1px solid #fff;"></div>
<div style="left:1102px;top:161px;width:236px;height:66px;background:#fff;"></div>
<span class="t" style="left:1105.69px;top:138px;font-size:16px;line-height:16px;color:#000;transform:scaleX(0.9091);transform-origin:left;">Listes de titres :</span>
<div style="left:1102px;top:161px;width:236px;height:8px;background:#fff;"></div>
<div style="left:1102px;top:169px;width:236px;height:14px;background:linear-gradient(180deg,#f7f8fa,#eff0f3);"></div>
<div style="left:1102px;top:183px;width:236px;height:1px;background:#d5d5d5;"></div>
<div style="left:1147px;top:162px;width:1px;height:21px;background:#e3e3e3;"></div>
<div style="left:1148px;top:162px;width:1px;height:21px;background:#fcfcfc;"></div>
<div style="left:1182px;top:162px;width:1px;height:21px;background:#e3e3e3;"></div>
<div style="left:1183px;top:162px;width:1px;height:21px;background:#fcfcfc;"></div>
<div style="left:1224px;top:162px;width:1px;height:21px;background:#e3e3e3;"></div>
<div style="left:1225px;top:162px;width:1px;height:21px;background:#fcfcfc;"></div>
<div style="left:1249px;top:162px;width:1px;height:21px;background:#e3e3e3;"></div>
<div style="left:1250px;top:162px;width:1px;height:21px;background:#fcfcfc;"></div>
<span class="t" style="left:1106.99px;top:167px;font-size:12px;line-height:12px;color:#000;transform:scaleX(0.9054);transform-origin:left;">Indices</span>
<span class="t" style="left:1153.08px;top:167px;font-size:12px;line-height:12px;color:#000;transform:scaleX(0.9167);transform-origin:left;">Date</span>
<span class="t" style="left:1189.50px;top:167px;font-size:12px;line-height:12px;color:#000;transform:scaleX(0.8529);transform-origin:left;">Valeur</span>
<span class="t" style="left:1236.40px;top:167px;font-size:12px;line-height:12px;color:#000;transform:scaleX(0.7400);transform-origin:left;">%</span>
<div style="left:1098px;top:239px;width:244px;height:100px;background:#9932cc;"></div>
<span class="t" style="left:1118.50px;top:249px;font-size:12px;line-height:12px;color:#fff;font-weight:bold;transform:scaleX(0.9625);transform-origin:left;">Alertes</span>
<div style="left:1102px;top:269px;width:236px;height:66px;background:#fff;"></div>
<div style="left:1102px;top:269px;width:236px;height:8px;background:#fff;"></div>
<div style="left:1102px;top:277px;width:236px;height:14px;background:linear-gradient(180deg,#f7f8fa,#eff0f3);"></div>
<div style="left:1102px;top:291px;width:236px;height:1px;background:#d5d5d5;"></div>
<div style="left:1139px;top:270px;width:1px;height:21px;background:#e3e3e3;"></div>
<div style="left:1140px;top:270px;width:1px;height:21px;background:#fcfcfc;"></div>
<div style="left:1183px;top:270px;width:1px;height:21px;background:#e3e3e3;"></div>
<div style="left:1184px;top:270px;width:1px;height:21px;background:#fcfcfc;"></div>
<div style="left:1218px;top:270px;width:1px;height:21px;background:#e3e3e3;"></div>
<div style="left:1219px;top:270px;width:1px;height:21px;background:#fcfcfc;"></div>
<div style="left:1260px;top:270px;width:1px;height:21px;background:#e3e3e3;"></div>
<div style="left:1261px;top:270px;width:1px;height:21px;background:#fcfcfc;"></div>
<div style="left:1321px;top:270px;width:1px;height:21px;background:#e3e3e3;"></div>
<div style="left:1322px;top:270px;width:1px;height:21px;background:#fcfcfc;"></div>
<span class="t" style="left:1108.70px;top:275px;font-size:12px;line-height:12px;color:#000;transform:scaleX(0.8414);transform-origin:left;">Titres</span>
<span class="t" style="left:1146.30px;top:275px;font-size:12px;line-height:12px;color:#000;transform:scaleX(0.8378);transform-origin:left;">Alertes</span>
<span class="t" style="left:1189.42px;top:275px;font-size:12px;line-height:12px;color:#000;transform:scaleX(0.8800);transform-origin:left;">Seuil</span>
<span class="t" style="left:1225.20px;top:275px;font-size:12px;line-height:12px;color:#000;transform:scaleX(0.8706);transform-origin:left;">Valeur</span>
<span class="t" style="left:1268.00px;top:275px;font-size:12px;line-height:12px;color:#000;transform:scaleX(0.9096);transform-origin:left;">Tendance</span>
<svg width="0" height="0" style="left:0;top:0"><defs>
<linearGradient id="gFold" x1="0" y1="0" x2="1" y2="1"><stop offset="0" stop-color="#fff4b8"/><stop offset="0.5" stop-color="#f4d060"/><stop offset="1" stop-color="#d89a20"/></linearGradient>
<linearGradient id="gTab" x1="0" y1="0" x2="0" y2="1"><stop offset="0" stop-color="#fff8d0"/><stop offset="1" stop-color="#e8d090"/></linearGradient>
<radialGradient id="gGlobe" cx="0.35" cy="0.3" r="0.8"><stop offset="0" stop-color="#a0e0a0"/><stop offset="0.4" stop-color="#30a040"/><stop offset="1" stop-color="#206030"/></radialGradient>
<linearGradient id="gStar" x1="0" y1="0" x2="0" y2="1"><stop offset="0" stop-color="#fff8a0"/><stop offset="0.6" stop-color="#f0c820"/><stop offset="1" stop-color="#c89010"/></linearGradient>
<linearGradient id="gChk" x1="0" y1="0" x2="1" y2="1"><stop offset="0" stop-color="#f8f8f8"/><stop offset="0.45" stop-color="#e8e8f0"/><stop offset="0.55" stop-color="#d0f0ff"/><stop offset="1" stop-color="#d0c8f8"/></linearGradient>
<linearGradient id="gBtn" x1="0" y1="0" x2="0" y2="1"><stop offset="0" stop-color="#f4f8ff"/><stop offset="1" stop-color="#b8cce8"/></linearGradient>
<linearGradient id="gUp" x1="0" x2="1"><stop offset="0" stop-color="#20d020"/><stop offset="0.45" stop-color="#80ff80"/><stop offset="1" stop-color="#10c010"/></linearGradient><linearGradient id="gRt" x1="0" y1="0" x2="0" y2="1"><stop offset="0" stop-color="#e0e0e0"/><stop offset="0.5" stop-color="#a8a8a8"/><stop offset="1" stop-color="#707070"/></linearGradient>
<linearGradient id="gDn" x1="0" x2="1"><stop offset="0" stop-color="#ff1010"/><stop offset="0.45" stop-color="#ff7070"/><stop offset="1" stop-color="#f00000"/></linearGradient>
<linearGradient id="gClip" x1="0" y1="0" x2="0" y2="1"><stop offset="0" stop-color="#fff0c0"/><stop offset="1" stop-color="#d8a840"/></linearGradient>
</defs></svg>
<svg width="17" height="16" viewBox="0 0 17 16" style="left:14px;top:93px;overflow:visible"><path d="M7.50,1.70 L9.32,6.49 L14.44,6.74 L10.45,9.96 L11.79,14.91 L7.50,12.10 L3.21,14.91 L4.55,9.96 L0.56,6.74 L5.68,6.49 Z" fill="url(#gStar)" stroke="#a07010" stroke-width="0.9"/><path d="M10.25 0.5 H12.75 V3.25 H15.5 V5.75 H12.75 V8.5 H10.25 V5.75 H7.5 V3.25 H10.25 Z" fill="#48b848" stroke="#1a5a1a" stroke-width="0.7"/></svg>
<svg width="17" height="16" viewBox="0 0 17 16" style="left:38px;top:93px;overflow:visible"><rect x="3" y="0.5" width="12.5" height="11" fill="#e8f0ff" stroke="#4060b0" stroke-width="1"/><rect x="13.5" y="2" width="1.5" height="2" fill="#e020a0"/><rect x="13.5" y="4.5" width="1.5" height="2" fill="#20d020"/><path d="M7.50,2.20 L9.32,6.99 L14.44,7.24 L10.45,10.46 L11.79,15.41 L7.50,12.60 L3.21,15.41 L4.55,10.46 L0.56,7.24 L5.68,6.99 Z" fill="url(#gStar)" stroke="#a07010" stroke-width="0.9"/></svg>
<svg width="17" height="16" viewBox="0 0 17 16" style="left:61px;top:93px;overflow:visible"><path d="M7.50,1.70 L9.32,6.49 L14.44,6.74 L10.45,9.96 L11.79,14.91 L7.50,12.10 L3.21,14.91 L4.55,9.96 L0.56,6.74 L5.68,6.49 Z" fill="url(#gStar)" stroke="#a07010" stroke-width="0.9"/><rect x="8.5" y="4" width="7.5" height="3" fill="#e04040" stroke="#a02020" stroke-width="0.6"/></svg>
<svg width="11" height="11" viewBox="0 0 11 11" style="left:296px;top:95px;overflow:visible"><rect x="0.5" y="0.5" width="10" height="10" rx="1.5" fill="url(#gBtn)" stroke="#8aa0c0" stroke-width="0.8"/><path d="M1.5 10.6 H10 Q10.6 10.6 10.6 10 V1.5" stroke="#2a3a5a" stroke-width="1.2" fill="none"/><path d="M2.5 5.5 H8.5" stroke="#2a3a5a" stroke-width="1.3"/></svg>
<svg width="11" height="11" viewBox="0 0 11 11" style="left:319px;top:95px;overflow:visible"><rect x="0.5" y="0.5" width="10" height="10" rx="1.5" fill="url(#gBtn)" stroke="#8aa0c0" stroke-width="0.8"/><path d="M1.5 10.6 H10 Q10.6 10.6 10.6 10 V1.5" stroke="#2a3a5a" stroke-width="1.2" fill="none"/><path d="M2.5 5.5 H8.5" stroke="#2a3a5a" stroke-width="1.3"/><path d="M5.5 2.5 V8.5" stroke="#2a3a5a" stroke-width="1.3"/></svg>
<svg width="15" height="15" viewBox="0 0 15 15" style="left:34px;top:115px;overflow:visible"><path d="M7.50,0.80 L9.35,5.75 L14.63,5.98 L10.50,9.27 L11.91,14.37 L7.50,11.45 L3.09,14.37 L4.50,9.27 L0.37,5.98 L5.65,5.75 Z" fill="url(#gStar)" stroke="#a07010" stroke-width="0.9"/></svg>
<svg width="17" height="16" viewBox="0 0 17 16" style="left:15px;top:403px;overflow:visible"><path d="M0.5 5 L0.5 4 L5 4 L6 5 Z" fill="url(#gTab)" stroke="#a08050"/><rect x="0.5" y="5" width="14" height="10.5" fill="url(#gFold)" stroke="#806030" stroke-width="0.8"/><path d="M1 15.6 H15 V6" stroke="#302000" stroke-width="1" fill="none"/><clipPath id="gc1"><circle cx="8" cy="10.5" r="4"/></clipPath><circle cx="8" cy="10.5" r="4" fill="#4a78d8"/><g clip-path="url(#gc1)"><path d="M4.4 8.5 Q7.2 7.3 8.4 6.3 L9.8 7.1 Q7.6 9.7 5.0 10.9 Z" fill="#30a840"/><path d="M6.8 13.5 Q8.2 10.9 10.2 9.1 L12.0 10.7 Q10.0 12.1 8.8 14.5 Z" fill="#30a840"/><ellipse cx="6.6" cy="8.7" rx="1.8" ry="1.2" fill="#d0ffd0" fill-opacity="0.45"/></g><circle cx="8" cy="10.5" r="3.7" fill="none" stroke="#2a5080" stroke-width="0.6" stroke-opacity="0.6"/><path d="M10.25 0.25 H12.75 V3.25 H15.75 V5.75 H12.75 V8.75 H10.25 V5.75 H7.25 V3.25 H10.25 Z" fill="#48b848" stroke="#1a5a1a" stroke-width="0.7"/></svg>
<svg width="17" height="16" viewBox="0 0 17 16" style="left:38px;top:403px;overflow:visible"><clipPath id="gc2"><circle cx="6" cy="9.5" r="5.4"/></clipPath><circle cx="6" cy="9.5" r="5.4" fill="#4a78d8"/><g clip-path="url(#gc2)"><path d="M1.1399999999999997 6.8 Q4.92 5.18 6.54 3.829999999999999 L8.43 4.91 Q5.46 8.42 1.9499999999999993 10.04 Z" fill="#30a840"/><path d="M4.38 13.55 Q6.27 10.04 8.97 7.61 L11.4 9.77 Q8.7 11.66 7.08 14.9 Z" fill="#30a840"/><ellipse cx="4.11" cy="7.07" rx="2.43" ry="1.62" fill="#d0ffd0" fill-opacity="0.45"/></g><circle cx="6" cy="9.5" r="5.1000000000000005" fill="none" stroke="#2a5080" stroke-width="0.6" stroke-opacity="0.6"/><path d="M10.25 0.25 H12.75 V3.25 H15.75 V5.75 H12.75 V8.75 H10.25 V5.75 H7.25 V3.25 H10.25 Z" fill="#48b848" stroke="#1a5a1a" stroke-width="0.7"/></svg>
<svg width="17" height="14" viewBox="0 0 17 14" style="left:60px;top:403px;overflow:visible"><rect x="0.8" y="1" width="14.5" height="11" fill="#e8f0ff" stroke="#4060b0" stroke-width="1"/><rect x="13.5" y="2" width="1.6" height="2.5" fill="#e020a0"/><rect x="13.5" y="5" width="1.6" height="2.5" fill="#20d020"/><clipPath id="gc3"><circle cx="8" cy="9.5" r="5"/></clipPath><circle cx="8" cy="9.5" r="5" fill="#4a78d8"/><g clip-path="url(#gc3)"><path d="M3.5 7.0 Q7.0 5.5 8.5 4.25 L10.25 5.25 Q7.5 8.5 4.25 10.0 Z" fill="#30a840"/><path d="M6.5 13.25 Q8.25 10.0 10.75 7.75 L13.0 9.75 Q10.5 11.5 9.0 14.5 Z" fill="#30a840"/><ellipse cx="6.25" cy="7.25" rx="2.25" ry="1.5" fill="#d0ffd0" fill-opacity="0.45"/></g><circle cx="8" cy="9.5" r="4.7" fill="none" stroke="#2a5080" stroke-width="0.6" stroke-opacity="0.6"/></svg>
<svg width="11" height="11" viewBox="0 0 11 11" style="left:250px;top:406px;overflow:visible"><rect x="0.8" y="0.8" width="9.6" height="9.6" fill="url(#gChk)" stroke="#3a4a6a" stroke-width="1.4"/></svg>
<svg width="11" height="11" viewBox="0 0 11 11" style="left:273px;top:406px;overflow:visible"><rect x="0.8" y="0.8" width="9.6" height="9.6" fill="url(#gChk)" stroke="#3a4a6a" stroke-width="1.4"/><path d="M3 5.5 L5 8 L8.5 3.5" stroke="#303030" stroke-width="1.6" fill="none"/></svg>
<svg width="11" height="11" viewBox="0 0 11 11" style="left:296px;top:405px;overflow:visible"><rect x="0.5" y="0.5" width="10" height="10" rx="1.5" fill="url(#gBtn)" stroke="#8aa0c0" stroke-width="0.8"/><path d="M1.5 10.6 H10 Q10.6 10.6 10.6 10 V1.5" stroke="#2a3a5a" stroke-width="1.2" fill="none"/><path d="M2.5 5.5 H8.5" stroke="#2a3a5a" stroke-width="1.3"/></svg>
<svg width="11" height="11" viewBox="0 0 11 11" style="left:319px;top:405px;overflow:visible"><rect x="0.5" y="0.5" width="10" height="10" rx="1.5" fill="url(#gBtn)" stroke="#8aa0c0" stroke-width="0.8"/><path d="M1.5 10.6 H10 Q10.6 10.6 10.6 10 V1.5" stroke="#2a3a5a" stroke-width="1.2" fill="none"/><path d="M2.5 5.5 H8.5" stroke="#2a3a5a" stroke-width="1.3"/><path d="M5.5 2.5 V8.5" stroke="#2a3a5a" stroke-width="1.3"/></svg>
<svg width="11" height="11" viewBox="0 0 11 11" style="left:36px;top:427px;overflow:visible"><rect x="0.5" y="0.5" width="10" height="10" rx="1" fill="url(#gChk)" stroke="#8888c8" stroke-width="1"/><path d="M1 10.6 H10.6 V1" stroke="#0a3030" stroke-width="1.3" fill="none"/><path d="M2 5.5 L4.5 8.5 L9.5 2" stroke="#108010" stroke-width="2" fill="none"/></svg>
<svg width="15" height="12" viewBox="0 0 15 12" style="left:50px;top:427px;overflow:visible"><path d="M0.5 2.5 L0.5 1 Q0.5 0.5 1 0.5 L6 0.5 L7.5 2.5 Z" fill="url(#gTab)" stroke="#b09050" stroke-width="0.8"/><rect x="0.5" y="2.5" width="13.5" height="9" fill="url(#gFold)" stroke="#a08040" stroke-width="0.8"/><path d="M1 11.8 H14.8 V3" stroke="#402800" stroke-width="1.2" fill="none"/><path d="M3 6.5 H10 M3 8.5 H11 M4 10 H10" stroke="#fff" stroke-width="1.6"/><path d="M3 6.5 H10 M3 8.5 H11 M4 10 H10" stroke="#4060c0" stroke-width="0.6"/></svg>
<svg width="11" height="11" viewBox="0 0 11 11" style="left:36px;top:443px;overflow:visible"><rect x="0.5" y="0.5" width="10" height="10" rx="1" fill="url(#gChk)" stroke="#8888c8" stroke-width="1"/><path d="M1 10.6 H10.6 V1" stroke="#0a3030" stroke-width="1.3" fill="none"/></svg>
<svg width="15" height="12" viewBox="0 0 15 12" style="left:50px;top:443px;overflow:visible"><path d="M0.5 2.5 L0.5 1 Q0.5 0.5 1 0.5 L6 0.5 L7.5 2.5 Z" fill="url(#gTab)" stroke="#b09050" stroke-width="0.8"/><rect x="0.5" y="2.5" width="13.5" height="9" fill="url(#gFold)" stroke="#a08040" stroke-width="0.8"/><path d="M1 11.8 H14.8 V3" stroke="#402800" stroke-width="1.2" fill="none"/><path d="M2 2 L6 11" stroke="#203880" stroke-width="0.9"/><path d="M2.5 2 L15 3 L7 8 Z" fill="#e02020"/><path d="M2.5 2 L7 2.5 L6 7 L3.6 5 Z" fill="#20e020"/><path d="M5 2.3 L8.5 2.6 L7 8 L5.5 6.5 Z" fill="#f0f020"/></svg>
<svg width="9" height="9" viewBox="0 0 9 9" style="left:19px;top:461px;overflow:visible"><rect x="0.5" y="0.5" width="8" height="8" rx="1.2" fill="#fafafa" stroke="#909090" stroke-width="1"/><path d="M2 4.5 H7 M4.5 2 V7" stroke="#203880" stroke-width="1.2"/></svg>
<svg width="11" height="11" viewBox="0 0 11 11" style="left:36px;top:459px;overflow:visible"><rect x="0.5" y="0.5" width="10" height="10" rx="1" fill="url(#gChk)" stroke="#8888c8" stroke-width="1"/><path d="M1 10.6 H10.6 V1" stroke="#0a3030" stroke-width="1.3" fill="none"/></svg>
<svg width="15" height="12" viewBox="0 0 15 12" style="left:50px;top:459px;overflow:visible"><path d="M0.5 2.5 L0.5 1 Q0.5 0.5 1 0.5 L6 0.5 L7.5 2.5 Z" fill="url(#gTab)" stroke="#b09050" stroke-width="0.8"/><rect x="0.5" y="2.5" width="13.5" height="9" fill="url(#gFold)" stroke="#a08040" stroke-width="0.8"/><path d="M1 11.8 H14.8 V3" stroke="#402800" stroke-width="1.2" fill="none"/></svg>
<svg width="9" height="9" viewBox="0 0 9 9" style="left:19px;top:477px;overflow:visible"><rect x="0.5" y="0.5" width="8" height="8" rx="1.2" fill="#fafafa" stroke="#909090" stroke-width="1"/><path d="M2 4.5 H7 M4.5 2 V7" stroke="#203880" stroke-width="1.2"/></svg>
<svg width="11" height="11" viewBox="0 0 11 11" style="left:36px;top:475px;overflow:visible"><rect x="0.5" y="0.5" width="10" height="10" rx="1" fill="url(#gChk)" stroke="#8888c8" stroke-width="1"/><path d="M1 10.6 H10.6 V1" stroke="#0a3030" stroke-width="1.3" fill="none"/></svg>
<svg width="15" height="12" viewBox="0 0 15 12" style="left:50px;top:475px;overflow:visible"><path d="M0.5 2.5 L0.5 1 Q0.5 0.5 1 0.5 L6 0.5 L7.5 2.5 Z" fill="url(#gTab)" stroke="#b09050" stroke-width="0.8"/><rect x="0.5" y="2.5" width="13.5" height="9" fill="url(#gFold)" stroke="#a08040" stroke-width="0.8"/><path d="M1 11.8 H14.8 V3" stroke="#402800" stroke-width="1.2" fill="none"/><path d="M5 5 L11 11 M11 5 L5 11" stroke="#ff1010" stroke-width="1.3"/></svg>
<svg width="9" height="9" viewBox="0 0 9 9" style="left:19px;top:493px;overflow:visible"><rect x="0.5" y="0.5" width="8" height="8" rx="1.2" fill="#fafafa" stroke="#909090" stroke-width="1"/><path d="M2 4.5 H7 M4.5 2 V7" stroke="#203880" stroke-width="1.2"/></svg>
<svg width="11" height="11" viewBox="0 0 11 11" style="left:36px;top:491px;overflow:visible"><rect x="0.5" y="0.5" width="10" height="10" rx="1" fill="url(#gChk)" stroke="#8888c8" stroke-width="1"/><path d="M1 10.6 H10.6 V1" stroke="#0a3030" stroke-width="1.3" fill="none"/></svg>
<svg width="15" height="12" viewBox="0 0 15 12" style="left:50px;top:491px;overflow:visible"><path d="M0.5 2.5 L0.5 1 Q0.5 0.5 1 0.5 L6 0.5 L7.5 2.5 Z" fill="url(#gTab)" stroke="#b09050" stroke-width="0.8"/><rect x="0.5" y="2.5" width="13.5" height="9" fill="url(#gFold)" stroke="#a08040" stroke-width="0.8"/><path d="M1 11.8 H14.8 V3" stroke="#402800" stroke-width="1.2" fill="none"/><path d="M2 9 L5 5.5 L8 9 L12 4" stroke="#ff2080" stroke-width="1" fill="none"/><path d="M2 5 L5 9 L8 6 L10 8" stroke="#2040c0" stroke-width="1" fill="none"/></svg>
<svg width="9" height="9" viewBox="0 0 9 9" style="left:19px;top:509px;overflow:visible"><rect x="0.5" y="0.5" width="8" height="8" rx="1.2" fill="#fafafa" stroke="#909090" stroke-width="1"/><path d="M2 4.5 H7 M4.5 2 V7" stroke="#203880" stroke-width="1.2"/></svg>
<svg width="11" height="11" viewBox="0 0 11 11" style="left:36px;top:507px;overflow:visible"><rect x="0.5" y="0.5" width="10" height="10" rx="1" fill="url(#gChk)" stroke="#8888c8" stroke-width="1"/><path d="M1 10.6 H10.6 V1" stroke="#0a3030" stroke-width="1.3" fill="none"/></svg>
<svg width="15" height="12" viewBox="0 0 15 12" style="left:50px;top:507px;overflow:visible"><path d="M0.5 2.5 L0.5 1 Q0.5 0.5 1 0.5 L6 0.5 L7.5 2.5 Z" fill="url(#gTab)" stroke="#b09050" stroke-width="0.8"/><rect x="0.5" y="2.5" width="13.5" height="9" fill="url(#gFold)" stroke="#a08040" stroke-width="0.8"/><path d="M1 11.8 H14.8 V3" stroke="#402800" stroke-width="1.2" fill="none"/><path d="M2 9 L5 5.5 L8 9 L12 4" stroke="#ff2080" stroke-width="1" fill="none"/><path d="M2 5 L5 9 L8 6 L10 8" stroke="#2040c0" stroke-width="1" fill="none"/></svg>
<svg width="11" height="11" viewBox="0 0 11 11" style="left:36px;top:523px;overflow:visible"><rect x="0.5" y="0.5" width="10" height="10" rx="1" fill="url(#gChk)" stroke="#8888c8" stroke-width="1"/><path d="M1 10.6 H10.6 V1" stroke="#0a3030" stroke-width="1.3" fill="none"/></svg>
<svg width="15" height="12" viewBox="0 0 15 12" style="left:51px;top:523px;overflow:visible"><path d="M0.5 2.5 L0.5 1 Q0.5 0.5 1 0.5 L6 0.5 L7.5 2.5 Z" fill="url(#gTab)" stroke="#b09050" stroke-width="0.8"/><rect x="0.5" y="2.5" width="13.5" height="9" fill="url(#gFold)" stroke="#a08040" stroke-width="0.8"/><path d="M1 11.8 H14.8 V3" stroke="#402800" stroke-width="1.2" fill="none"/><clipPath id="gc4"><circle cx="8.5" cy="7.5" r="3.8"/></clipPath><circle cx="8.5" cy="7.5" r="3.8" fill="#4a78d8"/><g clip-path="url(#gc4)"><path d="M5.08 5.6 Q7.74 4.46 8.88 3.5100000000000002 L10.21 4.27 Q8.12 6.74 5.65 7.88 Z" fill="#30a840"/><path d="M7.36 10.35 Q8.69 7.88 10.59 6.17 L12.3 7.69 Q10.4 9.02 9.26 11.3 Z" fill="#30a840"/><ellipse cx="7.17" cy="5.79" rx="1.71" ry="1.14" fill="#d0ffd0" fill-opacity="0.45"/></g><circle cx="8.5" cy="7.5" r="3.5" fill="none" stroke="#2a5080" stroke-width="0.6" stroke-opacity="0.6"/></svg>
<svg width="9" height="9" viewBox="0 0 9 9" style="left:19px;top:541px;overflow:visible"><rect x="0.5" y="0.5" width="8" height="8" rx="1.2" fill="#fafafa" stroke="#909090" stroke-width="1"/><path d="M2 4.5 H7 M4.5 2 V7" stroke="#203880" stroke-width="1.2"/></svg>
<svg width="11" height="11" viewBox="0 0 11 11" style="left:36px;top:539px;overflow:visible"><rect x="0.5" y="0.5" width="10" height="10" rx="1" fill="url(#gChk)" stroke="#8888c8" stroke-width="1"/><path d="M1 10.6 H10.6 V1" stroke="#0a3030" stroke-width="1.3" fill="none"/></svg>
<svg width="15" height="12" viewBox="0 0 15 12" style="left:51px;top:539px;overflow:visible"><path d="M0.5 2.5 L0.5 1 Q0.5 0.5 1 0.5 L6 0.5 L7.5 2.5 Z" fill="url(#gTab)" stroke="#b09050" stroke-width="0.8"/><rect x="0.5" y="2.5" width="13.5" height="9" fill="url(#gFold)" stroke="#a08040" stroke-width="0.8"/><path d="M1 11.8 H14.8 V3" stroke="#402800" stroke-width="1.2" fill="none"/><clipPath id="gc5"><circle cx="8.5" cy="7.5" r="3.8"/></clipPath><circle cx="8.5" cy="7.5" r="3.8" fill="#4a78d8"/><g clip-path="url(#gc5)"><path d="M5.08 5.6 Q7.74 4.46 8.88 3.5100000000000002 L10.21 4.27 Q8.12 6.74 5.65 7.88 Z" fill="#30a840"/><path d="M7.36 10.35 Q8.69 7.88 10.59 6.17 L12.3 7.69 Q10.4 9.02 9.26 11.3 Z" fill="#30a840"/><ellipse cx="7.17" cy="5.79" rx="1.71" ry="1.14" fill="#d0ffd0" fill-opacity="0.45"/></g><circle cx="8.5" cy="7.5" r="3.5" fill="none" stroke="#2a5080" stroke-width="0.6" stroke-opacity="0.6"/></svg>
<svg width="17" height="16" viewBox="0 0 17 16" style="left:294px;top:838px;overflow:visible"><path d="M1.5 11 L10 2.5 Q11 1.5 12 2.5 L14.5 5 Q15.5 6 14.5 7 L6 15.5 Q5 16.5 4 15.5 L1.5 13 Q0.5 12 1.5 11 Z" fill="#f4b0b0" stroke="#c03030" stroke-width="1"/><path d="M3 11 L10.5 3.5" stroke="#ffe0e0" stroke-width="1.5"/></svg>
<svg width="15" height="12" viewBox="0 0 15 12" style="left:317px;top:839px;overflow:visible"><path d="M1 6 L5 10 L14 1" stroke="#3060d0" stroke-width="2.4" fill="none"/></svg>
<svg width="14" height="16" viewBox="0 0 14 16" style="left:360px;top:351px;overflow:visible"><rect x="0.5" y="2.5" width="12.5" height="12.5" rx="1" fill="#dde8f8" stroke="#506aa0" stroke-width="1"/><rect x="4" y="0.5" width="5.5" height="4" rx="1" fill="#e8d890" stroke="#907030" stroke-width="0.8"/><path d="M2.5 9 L5.5 12 L12 5" stroke="#e04020" stroke-width="2" fill="none"/></svg>
<svg width="23" height="20" viewBox="0 0 23 20" style="left:379px;top:349px;overflow:visible"><rect x="0.5" y="0.5" width="22" height="19" rx="3" fill="#dcdcdc" stroke="#505050" stroke-width="1"/><path d="M4 7 L11 5 L11 17 L5 16 Z" fill="#d0f0ff" stroke="#d03030" stroke-width="1"/><path d="M11 5 L18 3 L19 15 L11 17 Z" fill="#b0e0f0" stroke="#d03030" stroke-width="1"/><path d="M12 9 L18 2" stroke="#d04040" stroke-width="1.5"/><path d="M11 6 V16" stroke="#808080" stroke-dasharray="1 1"/></svg>
<div style="left:409px;top:349px;width:1px;height:20px;background:#8a8a8a;"></div>
<svg width="11" height="14" viewBox="0 0 11 14" style="left:423px;top:352px;overflow:visible"><path d="M3 0.5 L6 8 M8 0.5 L5 8" stroke="#506070" stroke-width="1.2"/><circle cx="2.8" cy="10.8" r="2.2" fill="none" stroke="#1040c0" stroke-width="1.6"/><circle cx="8.2" cy="10.8" r="2.2" fill="none" stroke="#1040c0" stroke-width="1.6"/></svg>
<svg width="16" height="14" viewBox="0 0 16 14" style="left:444px;top:352px;overflow:visible"><path d="M0.5 0.5 H6 L8 2.5 V10 H0.5 Z" fill="#f0f6ff" stroke="#3060c0" stroke-width="0.9"/><path d="M6.5 3.5 H12 L14.5 6 V13.5 H6.5 Z" fill="#f0f6ff" stroke="#1a40a0" stroke-width="1"/><path d="M8 7 H13 M8 9 H13 M8 11 H13" stroke="#3070d0" stroke-width="0.9"/><path d="M1.5 4 H6 M1.5 6 H6" stroke="#3070d0" stroke-width="0.8"/></svg>
<svg width="16" height="14" viewBox="0 0 16 14" style="left:467px;top:352px;overflow:visible"><rect x="0.5" y="2" width="11" height="11.5" rx="1" fill="#f0c040" stroke="#806020" stroke-width="0.9"/><rect x="3.5" y="0.5" width="5" height="3" fill="#e8e0b0" stroke="#807040" stroke-width="0.7"/><rect x="5.5" y="6.5" width="9.5" height="7" fill="#e0e8f8" stroke="#203870" stroke-width="1"/><path d="M7 9 H13 M7 11 H12" stroke="#6080b0" stroke-width="0.8"/></svg>
<div style="left:489px;top:349px;width:1px;height:20px;background:#8a8a8a;"></div>
<span class="t" style="left:498.70px;top:351px;font-size:14px;line-height:14px;color:#000;font-weight:bold;font-family:'Liberation Serif', serif;transform:scaleX(1.0556);transform-origin:left;">B</span>
<span class="t" style="left:521px;top:353px;font-size:14px;line-height:14px;font-family:'Liberation Serif',serif;font-weight:bold;font-style:italic;transform:scaleX(1.15);transform-origin:left">I</span>
<span class="t" style="left:543.67px;top:351px;font-size:14px;line-height:14px;color:#000;font-weight:bold;font-family:'Liberation Serif', serif;transform:scaleX(1.0333);transform-origin:left;">U</span>
<div style="left:545px;top:364px;width:9px;height:1px;background:#000;"></div>
<div style="left:564px;top:349px;width:1px;height:20px;background:#8a8a8a;"></div>
<svg width="9" height="6" viewBox="0 0 9 6" style="left:575px;top:351px;overflow:visible"><path d="M0.5 0.5 L3.5 3 L0.5 5.5 M4.5 0.5 L7.5 3 L4.5 5.5" stroke="#6060b0" stroke-width="1.2" fill="none"/></svg>
<svg width="9" height="6" viewBox="0 0 9 6" style="left:825px;top:217px;overflow:visible"><path d="M0.5 0.5 L3.5 3 L0.5 5.5 M4.5 0.5 L7.5 3 L4.5 5.5" stroke="#6060b0" stroke-width="1.2" fill="none"/></svg>
<svg width="6" height="4" viewBox="0 0 6 4" style="left:783px;top:229px;overflow:visible"><path d="M0 0 H5 L2.5 3 Z" fill="#000"/></svg>
<svg width="13" height="13" viewBox="0 0 13 13" style="left:1283px;top:902px;overflow:visible"><circle cx="6.5" cy="6.5" r="5.8" fill="#e8f0ff" stroke="#4a70c0" stroke-width="1.2"/><path d="M6.5 3 V6.8 H9.5" stroke="#203060" stroke-width="1.1" fill="none"/></svg>
<svg width="6" height="4" viewBox="0 0 6 4" style="left:1300px;top:908px;overflow:visible"><path d="M0 0 H5 L2.5 3 Z" fill="#000"/></svg>
<div style="left:1348px;top:910px;width:2px;height:2px;background:#a0a0a8;"></div>
<div style="left:1344px;top:914px;width:2px;height:2px;background:#a0a0a8;"></div>
<div style="left:1348px;top:914px;width:2px;height:2px;background:#a0a0a8;"></div>
<div style="left:1340px;top:918px;width:2px;height:2px;background:#a0a0a8;"></div>
<div style="left:1344px;top:918px;width:2px;height:2px;background:#a0a0a8;"></div>
<div style="left:1348px;top:918px;width:2px;height:2px;background:#a0a0a8;"></div>
</body></html>
